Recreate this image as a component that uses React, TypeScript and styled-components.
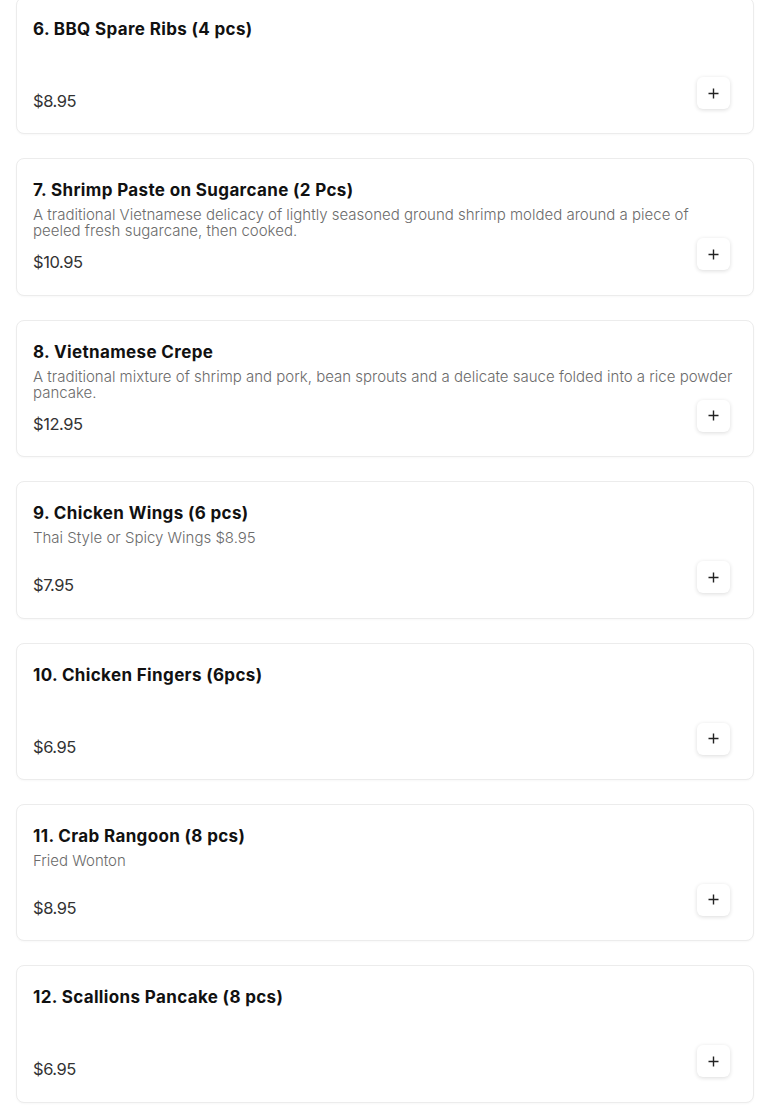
import React from 'react';
import styled, { createGlobalStyle } from 'styled-components';

const GlobalStyle = createGlobalStyle`
body {
    margin: 0;
    background: #ffffff;
    font-family: Inter, "Open Sans", sans-serif;
}
`;

const Page = styled.div`
padding: 0 16px;
overflow: hidden;
height: 1113px;
`;

const MenuList = styled.div`
display: flex;
flex-direction: column;
gap: 24px;
margin-top: -3px;
`;

const Card = styled.div`
display: flex;
flex-direction: column;
border: 1px solid #ececec;
border-radius: 8px;
background: #fff;
box-shadow: 0 1px 2px rgba(0, 0, 0, 0.03);
padding: 19px 16px 20.4px 16px;
`;

const Title = styled.div`
font-size: 17px;
line-height: 24px;
font-weight: 700;
color: #111;
letter-spacing: 0.36px;
`;

const Description = styled.div`
margin-top: 5px;
min-height: 32px;
font-size: 15px;
line-height: 16px;
font-weight: 300;
color: #6b6b6b;
`;

const Footer = styled.div`
display: flex;
align-items: flex-start;
justify-content: space-between;
margin-top: -1px;
`;

const Price = styled.div`
margin-top: 12px;
font-size: 16.5px;
line-height: 24px;
font-weight: 400;
color: #333;
letter-spacing: -0.45px;
`;

const AddButton = styled.button`
width: 33px;
height: 32px;
margin-right: 7px;
border: none;
border-radius: 6px;
background: #fff;
box-shadow: 0 1px 4px rgba(0, 0, 0, 0.14);
display: flex;
align-items: center;
justify-content: center;
padding: 0;
cursor: pointer;
`;

interface IMenuItem {
    name: string;
    description?: string;
    price: string;
}

const items: Array<IMenuItem> = [
    { name: '6. BBQ Spare Ribs (4 pcs)', price: '$8.95' },
    {
        name: '7. Shrimp Paste on Sugarcane (2 Pcs)',
        description: 'A traditional Vietnamese delicacy of lightly seasoned ground shrimp molded around a piece of peeled fresh sugarcane, then cooked.',
        price: '$10.95',
    },
    {
        name: '8. Vietnamese Crepe',
        description: 'A traditional mixture of shrimp and pork, bean sprouts and a delicate sauce folded into a rice powder pancake.',
        price: '$12.95',
    },
    { name: '9. Chicken Wings (6 pcs)', description: 'Thai Style or Spicy Wings $8.95', price: '$7.95' },
    { name: '10. Chicken Fingers (6pcs)', price: '$6.95' },
    { name: '11. Crab Rangoon (8 pcs)', description: 'Fried Wonton', price: '$8.95' },
    { name: '12. Scallions Pancake (8 pcs)', price: '$6.95' },
];

const PlusIcon = () => (
    <svg width="11" height="11" viewBox="0 0 11 11">
        <path d="M5.5 0.5v10M0.5 5.5h10" stroke="#222" strokeWidth="1.4" fill="none" />
    </svg>
);

const App: React.FC = () => {
    return (
        <Page>
            <GlobalStyle />
            <MenuList>
                {items.map((item) => (
                    <Card key={item.name}>
                        <Title>{item.name}</Title>
                        <Description>{item.description}</Description>
                        <Footer>
                            <Price>{item.price}</Price>
                            <AddButton aria-label="Add"><PlusIcon /></AddButton>
                        </Footer>
                    </Card>
                ))}
            </MenuList>
        </Page>
    );
};

export default App;
